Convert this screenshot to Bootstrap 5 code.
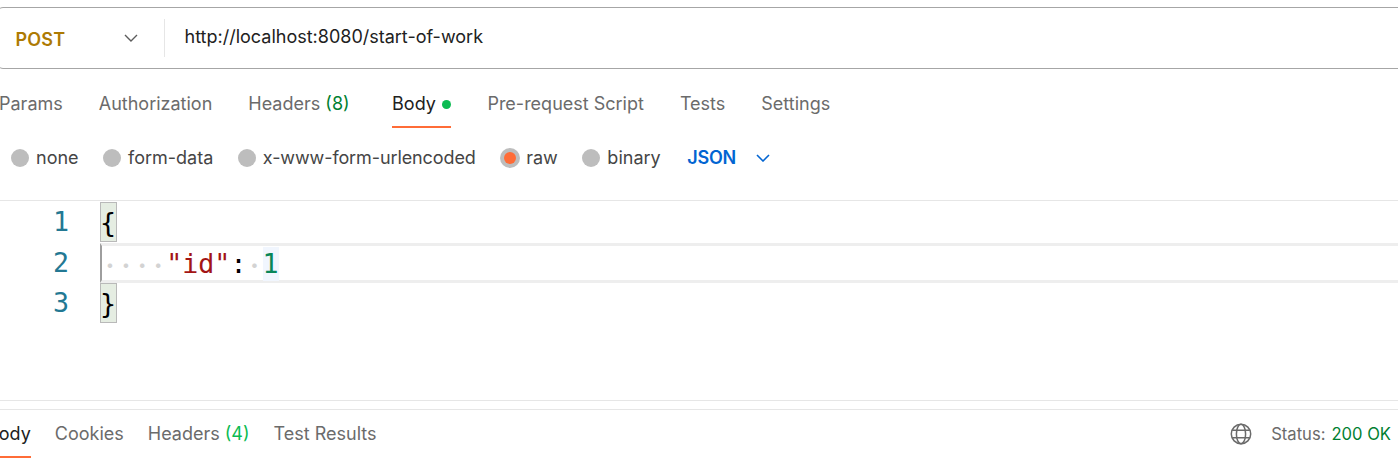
<!DOCTYPE html>
<html lang="en"><head><meta charset="utf-8"><title>Request</title>
<link href="https://cdn.jsdelivr.net/npm/bootstrap@5.3.0/dist/css/bootstrap.min.css" rel="stylesheet">
<style>
html,body{height:459px;overflow:hidden;background:#fff}
body{font-family:Inter,"Liberation Sans",sans-serif;font-size:18px;color:#212121;line-height:24px}
.urlbar{height:62px;margin:7px -8px 0 -3px;border:1px solid #a6a6a6;border-radius:6px;padding:0 0 0 17.5px}
.method{width:149.5px;height:38px;border-right:1px solid #e6e6e6;margin-right:19.5px;padding-right:26px;color:#ad7a03;font-weight:600}
.methodname{padding-top:3px;letter-spacing:.2px}
.urltext{position:relative;top:-1px}
.reqtabs{height:59px;gap:36px;color:#6b6b6b;margin-left:-1px}
.tabitem{height:59px;display:flex;align-items:center;white-space:nowrap;padding-top:11px;position:relative}
.tabactive{color:#212121}
.reqtabs .tabactive{margin-left:6.5px}
.tabactive::after{content:"";position:absolute;left:0;right:0;bottom:0;height:2px;background:#ff6c37}
.cnt{color:#007f31}
.dotg{width:9px;height:9px;border-radius:50%;background:#0cbb52;margin-left:6.5px;margin-top:1px}
.bodyopts{height:72px;padding-left:11px;padding-bottom:12px;color:#454545}
.rad{width:18px;height:18px;border-radius:50%;background:#bdbdbd;margin-right:7px;flex:none}
.radsel{display:flex;align-items:center;justify-content:center;width:20px;height:20px;margin-right:6px}
.radsel::before{content:"";width:12px;height:12px;border-radius:50%;background:#ff6c37}
.opt{margin-right:24.5px}
.tightopt{letter-spacing:-.1px}
.jsonlbl{color:#0265d2;font-weight:600;margin-right:19.5px;margin-left:2px;letter-spacing:-.2px}
.editor{border-top:1px solid #e6e6e6;height:200px;padding-top:1px;font-family:"DejaVu Sans Mono","Liberation Mono",monospace;font-size:26.67px;line-height:40px}
.cline{height:40.5px;display:flex}
.gut{width:100px;padding-right:31px;text-align:right;color:#237893;flex:none}
.ctext{flex:1;white-space:pre;min-width:0}
.brk{display:inline-block;width:17px;height:40px;background:#e5ede2;border:1px solid #b9b9b9;color:#000;text-indent:-1px}
.bmid{border-top:3px solid #eeeeee;border-bottom:3px solid #eeeeee;border-left:2px solid #9e9e9e;line-height:34px;height:40px}
.ws{color:#d3d3d3;display:inline-block;width:16.05px;text-align:center;font-family:Inter,sans-serif;font-weight:700;position:relative;top:2px}
.str{color:#a31515}.pun{color:#000}.num{color:#098658;background:#f1f6fe;display:inline-block;height:34px}
.resp{border-top:1px solid #e6e6e6;height:49px;margin-top:8px}
.resp .tabitem{height:48px;padding-top:0;color:#6b6b6b}
.resp .tabactive{color:#212121;margin-left:-13px}
.resptabs{gap:24px}
.rtight{padding-right:7px;color:#6b6b6b}
.okc{color:#007f31;margin-left:6px}
.greenc{color:#0cbb52}
.pre{border-top:1px solid #e6e6e6}
.globe{margin-right:19px}
.stat{font-size:16.6px}
</style></head><body>
<div class="urlbar d-flex align-items-center">
  <div class="method d-flex align-items-center justify-content-between"><span class="methodname">POST</span>
    <svg width="14" height="8" viewBox="0 0 14 8" fill="none" stroke="#5c5c5c" stroke-width="1.4"><path d="M1 1l6 6 6-6"/></svg></div>
  <div class="urltext">http://localhost:8080/start-of-work</div>
</div>
<div class="reqtabs d-flex">
  <div class="tabitem">Params</div><div class="tabitem">Authorization</div>
  <div class="tabitem">Headers&nbsp;<span class="cnt">(8)</span></div>
  <div class="tabitem tabactive">Body<span class="dotg"></span></div>
  <div class="tabitem">Pre-request Script</div><div class="tabitem">Tests</div><div class="tabitem">Settings</div>
</div>
<div class="bodyopts d-flex align-items-center">
  <span class="rad"></span><span class="opt">none</span>
  <span class="rad"></span><span class="opt">form-data</span>
  <span class="rad"></span><span class="opt tightopt">x-www-form-urlencoded</span>
  <span class="rad radsel"></span><span class="opt">raw</span>
  <span class="rad"></span><span class="opt">binary</span>
  <span class="jsonlbl">JSON</span>
  <svg width="14" height="8" viewBox="0 0 14 8" fill="none" stroke="#0265d2" stroke-width="1.6"><path d="M1 1l6 6 6-6"/></svg>
</div>
<div class="editor">
  <div class="cline"><div class="gut">1</div><div class="ctext"><span class="brk">{</span></div></div>
  <div class="cline"><div class="gut">2</div><div class="ctext bmid"><span class="ws">·</span><span class="ws">·</span><span class="ws">·</span><span class="ws">·</span><span class="str">"id"</span><span class="pun">:</span><span class="ws">·</span><span class="num">1</span></div></div>
  <div class="cline"><div class="gut">3</div><div class="ctext"><span class="brk">}</span></div></div>
</div>
<div class="pre"></div>
<div class="resp d-flex justify-content-between">
  <div class="resptabs d-flex">
    <div class="tabitem tabactive">Body</div><div class="tabitem">Cookies</div>
    <div class="tabitem">Headers&nbsp;<span class="greenc">(4)</span></div><div class="tabitem">Test Results</div>
  </div>
  <div class="rtight d-flex align-items-center">
    <svg class="globe" width="22" height="22" viewBox="0 0 22 22" fill="none" stroke="#6b6b6b" stroke-width="1.5"><circle cx="11" cy="11" r="9.7"/><ellipse cx="11" cy="11" rx="4.6" ry="9.7"/><path d="M2.2 7.2h17.6M2.2 14.8h17.6"/></svg>
    <span class="stat">Status:</span><span class="okc stat">200 OK</span>
  </div>
</div>
</body></html>
